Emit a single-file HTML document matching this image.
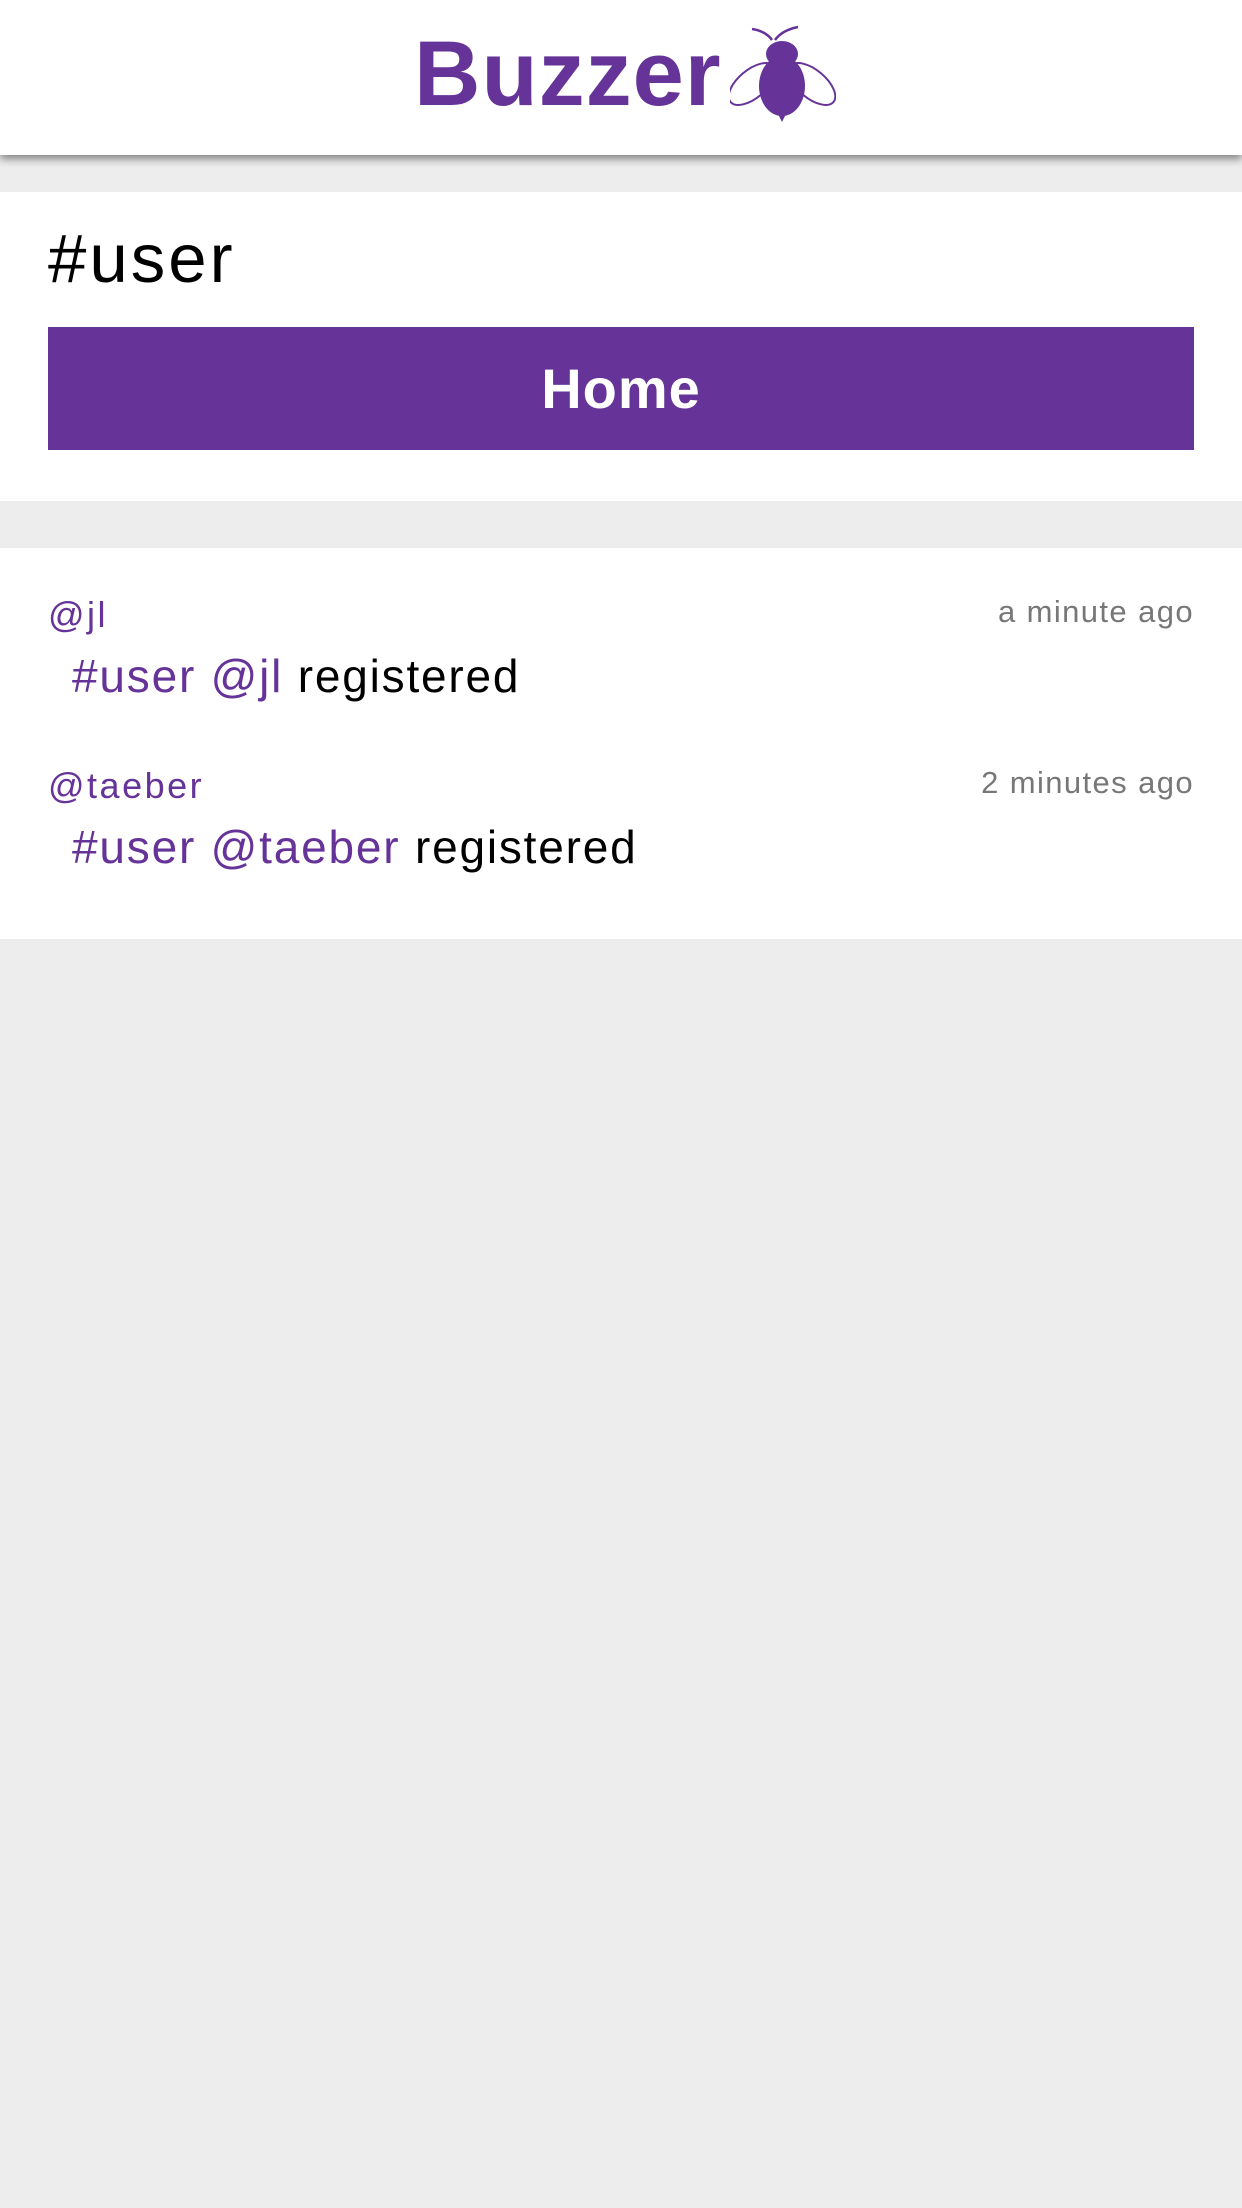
<!DOCTYPE html>
<html><head><meta charset="utf-8"><style>
*{margin:0;padding:0;box-sizing:border-box}
body{width:1242px;height:2208px;background:#ededed;font-family:"Liberation Sans",sans-serif;position:relative;overflow:hidden}
.hdr{position:absolute;left:0;top:0;width:1242px;height:155px;background:#fff;box-shadow:0 4px 8px rgba(0,0,0,.45)}
.logo{position:absolute;left:414px;top:19px;font-size:92px;font-weight:bold;color:#663399;letter-spacing:1px;line-height:110px}
.card1{position:absolute;left:0;top:192px;width:1242px;height:309px;background:#fff}
.title{position:absolute;left:48px;top:27px;font-size:69px;line-height:80px;color:#000;letter-spacing:3px}
.btn{position:absolute;left:48px;top:135px;width:1146px;height:123px;background:#663399;color:#fff;font-weight:bold;font-size:56px;text-align:center;line-height:123px;letter-spacing:1px}
.card2{position:absolute;left:0;top:548px;width:1242px;height:391px;background:#fff}
.u{position:absolute;left:48px;font-size:36px;color:#663399;line-height:40px;letter-spacing:2.5px}
.m{position:absolute;left:72px;font-size:46px;color:#663399;line-height:50px;white-space:nowrap;letter-spacing:1.8px}
.m b{font-weight:normal;color:#000}
.t{position:absolute;right:48px;font-size:31px;color:#777;line-height:36px;letter-spacing:1.4px}
</style></head><body>
<div class="hdr">
<div class="logo">Buzzer</div>
<svg style="position:absolute;left:730px;top:24px" width="106" height="102" viewBox="0 0 106 102">
<path d="M42 16 C38 10 30 6 22 5" stroke="#663399" stroke-width="2.5" fill="none"/>
<path d="M45 16 C50 9 58 5 68 3" stroke="#663399" stroke-width="2.5" fill="none"/>
<ellipse cx="22" cy="60" rx="28" ry="14" transform="rotate(-40 22 60)" stroke="#663399" stroke-width="2" fill="none"/>
<ellipse cx="82" cy="60" rx="28" ry="14" transform="rotate(40 82 60)" stroke="#663399" stroke-width="2" fill="none"/>
<ellipse cx="52" cy="30" rx="16" ry="13" fill="#663399"/>
<ellipse cx="52" cy="62" rx="23" ry="30" fill="#663399"/>
<path d="M47 88 L52 98 L57 88 Z" fill="#663399"/>
</svg>
</div>
<div class="card1">
<div class="title">#user</div>
<div class="btn">Home</div>
</div>
<div class="card2">
<div class="u" style="top:47px">@jl</div>
<div class="t" style="top:46px">a minute ago</div>
<div class="m" style="top:103px">#user @jl <b>registered</b></div>
<div class="u" style="top:218px">@taeber</div>
<div class="t" style="top:217px">2 minutes ago</div>
<div class="m" style="top:274px">#user @taeber <b>registered</b></div>
</div>
</body></html>
